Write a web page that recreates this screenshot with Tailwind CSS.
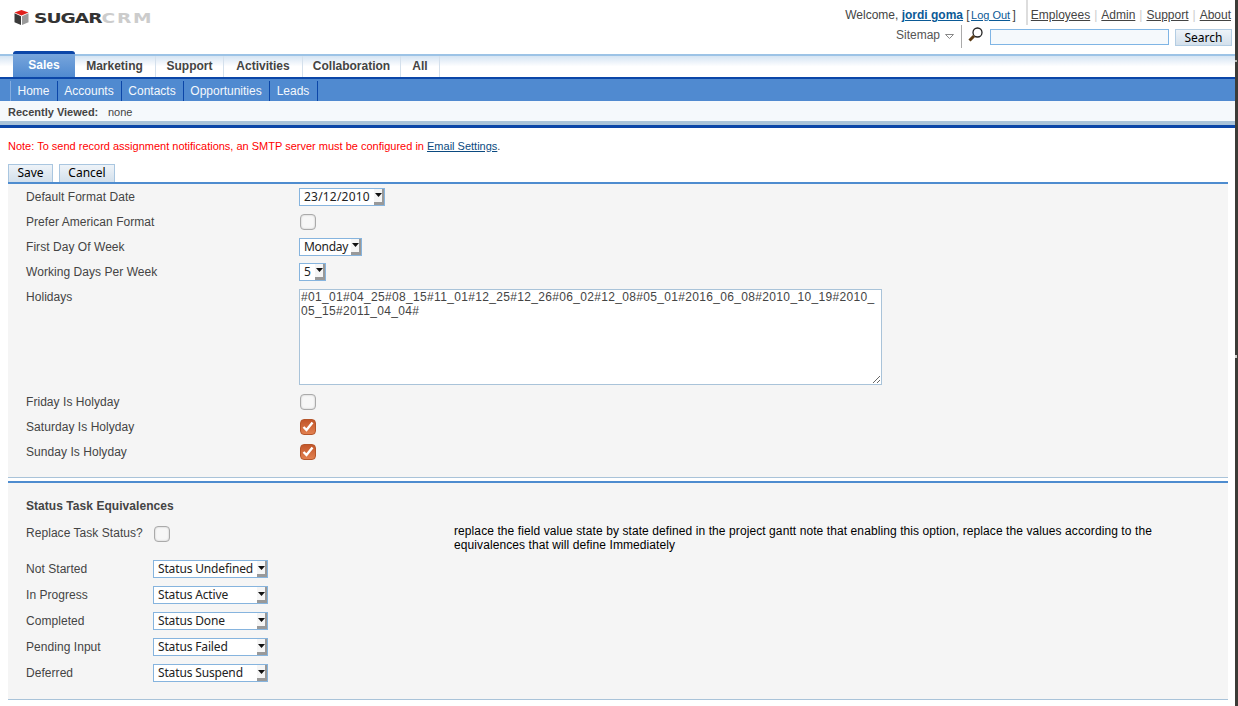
<!DOCTYPE html>
<html lang="en">
<head>
    <meta charset="UTF-8">
    <title>SugarCRM</title>
    <script src="https://cdn.jsdelivr.net/npm/@tailwindcss/browser@4"></script>
</head>
<body class="bg-white overflow-hidden h-[706px] font-['Liberation_Sans',sans-serif] text-[12px] text-[#444]">
<div class="flex h-[706px]">
<div class="w-[1235px] shrink-0">

    <!-- header -->
    <header class="h-[54px] flex justify-between">
        <div class="pl-[14px] pt-[10px] flex items-start">
            <svg width="15" height="15" viewBox="0 0 15 15">
                <path d="M7.5 0 L14.5 2.5 L7.5 5.5 L0.5 2.5 Z" fill="#e0201c"/>
                <path d="M0.5 3.2 L7 6.2 V15 L0.5 12.2 Z" fill="#3a3a3a"/>
                <path d="M8 6.2 L14.5 3.2 V12.2 L8 15 Z" fill="#9a9a9a"/>
            </svg>
            <div class="ml-[5px] mt-[1px] font-['DejaVu_Sans',sans-serif] font-bold text-[14px] leading-[15px] origin-left scale-x-[1.33] whitespace-nowrap text-[#333] tracking-[-0.75px]">SUGAR<span class="text-[#ccc] tracking-[1.3px]">CRM</span></div>
        </div>
        <div class="flex flex-col items-end pr-[4px]">
            <div class="flex h-[25px]">
                <div class="pt-[8px] leading-[14px] pr-[10px] text-[#444]">Welcome, <a class="font-bold text-[#0b5a96] underline">jordi goma</a> [ <a class="-ml-[2px] text-[11px] text-[#0b5a96] underline">Log Out</a><span class="-ml-[1px]"> ]</span></div>
                <div class="w-[2px] bg-[#ddd]"></div>
                <div class="pt-[8px] pl-[3px] leading-[14px] flex text-[#444]">
                    <a class="underline">Employees</a><span class="px-[4px] text-[#ccc]">|</span>
                    <a class="underline">Admin</a><span class="px-[4px] text-[#ccc]">|</span>
                    <a class="underline">Support</a><span class="px-[4px] text-[#ccc]">|</span>
                    <a class="underline">About</a>
                </div>
            </div>
            <div class="flex h-[23px] items-start -mr-[1px]">
                <div class="pt-[3px] leading-[14px] text-[#555]">Sitemap</div>
                <svg width="9" height="5" viewBox="0 0 9 5" class="ml-[5px] mt-[9px]"><path d="M0.5 0.5 H8.5 L4.5 4.5 Z" fill="none" stroke="#888"/></svg>
                <div class="ml-[7px] w-[1px] h-[23px] bg-[#aaa]"></div>
                <svg width="15" height="15" viewBox="0 0 15 15" class="ml-[6px] mt-[2px]">
                    <circle cx="9.5" cy="5.5" r="4.5" fill="#fff" stroke="#222" stroke-width="1.3"/>
                    <path d="M6 9 L1.5 13.5" stroke="#5a3a14" stroke-width="3"/>
                </svg>
                <input type="text" class="ml-[7px] mt-[4px] w-[179px] h-[16px] border border-[#7fb5e5] bg-[#f5f9fc]">
                <button class="ml-[6px] mt-[4px] w-[57px] h-[17px] border border-[#b3cde3] bg-gradient-to-b from-[#eef3f8] to-[#d3e0ec] font-['Noto_Sans',sans-serif] text-[12px] leading-[15px] text-black">Search</button>
            </div>
        </div>
    </header>

    <!-- module tabs -->
    <nav class="h-[25px] border-t-2 border-[#9cc3e6] bg-gradient-to-b from-[#d5e4f3] via-white to-white border-b-2 border-b-[#0b46a8] flex pl-[13px] font-bold text-[12px] leading-[21px] text-[#444]">
        <a class="relative -mt-[5px] h-[26px] w-[62px] rounded-t-[3px] border-t-[3px] border-[#0b46a8] bg-gradient-to-b from-[#77a5dc] to-[#508ad0] text-center text-white leading-[23px]">Sales</a>
        <a class="w-[81px] pr-[1px] text-center border-r border-[#d4e0ec]">Marketing</a>
        <a class="w-[68px] text-center border-r border-[#d4e0ec]">Support</a>
        <a class="w-[79px] text-center border-r border-[#d4e0ec]">Activities</a>
        <a class="w-[98px] text-center border-r border-[#d4e0ec]">Collaboration</a>
        <a class="w-[39px] text-center border-r border-[#d4e0ec]">All</a>
    </nav>

    <!-- sub tabs -->
    <div class="h-[22px] bg-[#508ad0] flex pl-[10px] pt-[2px] text-[12px] leading-[20px] text-[#f4f8fc]">
        <a class="w-[48px] pr-[1px] text-center border-l border-[#84ade0] border-r border-r-[#0b46a8]">Home</a>
        <a class="w-[64px] pr-[1px] text-center border-r border-[#0b46a8]">Accounts</a>
        <a class="w-[62px] pr-[1px] text-center border-r border-[#0b46a8]">Contacts</a>
        <a class="w-[86px] pr-[1px] text-center border-r border-[#0b46a8]">Opportunities</a>
        <a class="w-[48px] pr-[1px] text-center border-r border-[#0b46a8]">Leads</a>
    </div>

    <!-- recently viewed -->
    <div class="h-[20px] bg-[#f5f9fc] flex items-center pl-[8px] pt-[2px] text-[11px] text-[#444]">
        <span class="font-bold w-[100px]">Recently Viewed:</span><span>none</span>
    </div>
    <div class="h-[4px] bg-[#a9c3d9]"></div>
    <div class="h-[3px] bg-[#0b46a8]"></div>

    <main class="pl-[8px] pr-[7px]">
        <p class="pt-[12px] leading-[13px] text-[11px] text-[#f00]">Note: To send record assignment notifications, an SMTP server must be configured in <a class="text-[#0b4a80] underline">Email Settings</a><span class="text-[#444]">.</span></p>

        <div class="mt-[11px] flex gap-[6px] h-[18px] font-['Noto_Sans',sans-serif] text-[12px] text-black">
            <button class="w-[45px] pb-[2px] border border-[#a9c6e0] border-b-0 bg-gradient-to-b from-[#eef3f8] to-[#d3e0ec] leading-[16px]">Save</button>
            <button class="w-[56px] pb-[2px] border border-[#a9c6e0] border-b-0 bg-gradient-to-b from-[#eef3f8] to-[#d3e0ec] leading-[16px]">Cancel</button>
        </div>

        <!-- first panel -->
        <section class="h-[296px] border-t-2 border-[#4e8ccf] border-b border-b-[#a9c3d9] bg-[#f5f5f5] pl-[18px] tracking-[0.05px]">
            <div class="grid grid-cols-[273px_1fr] auto-rows-[25px] items-center">
                <div>Default Format Date</div>
                <div class="relative w-[86px] h-[18px] border border-[#86b4de] bg-white pl-[4px] font-['Noto_Sans',sans-serif] text-[12px] leading-[15px] tracking-[0.2px] text-[#222]">
                    23/12/2010
                    <div class="absolute right-0 top-0 w-[10px] h-[16px] bg-[#f5f5f5] border-r-2 border-b-[3px] border-[#999] flex items-center justify-center"><svg width="7" height="4"><path d="M0 0 H7 L3.5 4 Z" fill="#111"/></svg></div>
                </div>

                <div>Prefer American Format</div>
                <div class="w-[16px] h-[16px] ml-[1px] rounded-[4px] border border-[#aaa] bg-[#f7f7f7] shadow-[inset_0_0_2px_#bbb]"></div>

                <div>First Day Of Week</div>
                <div class="relative w-[63px] h-[18px] border border-[#86b4de] bg-white pl-[4px] font-['Noto_Sans',sans-serif] text-[12px] leading-[15px] tracking-[-0.3px] text-[#222]">
                    Monday
                    <div class="absolute right-0 top-0 w-[10px] h-[16px] bg-[#f5f5f5] border-r-2 border-b-[3px] border-[#999] flex items-center justify-center"><svg width="7" height="4"><path d="M0 0 H7 L3.5 4 Z" fill="#111"/></svg></div>
                </div>

                <div>Working Days Per Week</div>
                <div class="relative w-[27px] h-[18px] border border-[#86b4de] bg-white pl-[4px] font-['Noto_Sans',sans-serif] text-[12px] leading-[15px] text-[#222]">
                    5
                    <div class="absolute right-0 top-0 w-[10px] h-[16px] bg-[#f5f5f5] border-r-2 border-b-[3px] border-[#999] flex items-center justify-center"><svg width="7" height="4"><path d="M0 0 H7 L3.5 4 Z" fill="#111"/></svg></div>
                </div>
            </div>

            <div class="grid grid-cols-[273px_1fr] h-[105px]">
                <div class="pt-[6px] leading-[14px]">Holidays</div>
                <textarea class="mt-[5px] w-[583px] h-[96px] border border-[#a9c3d9] bg-white pl-[1px] pt-0 text-[12px] leading-[14px] tracking-[0.33px] text-[#444] whitespace-pre">#01_01#04_25#08_15#11_01#12_25#12_26#06_02#12_08#05_01#2016_06_08#2010_10_19#2010_
05_15#2011_04_04#</textarea>
            </div>

            <div class="grid grid-cols-[273px_1fr] auto-rows-[25px] items-center">
                <div>Friday Is Holyday</div>
                <div class="w-[16px] h-[16px] ml-[1px] rounded-[4px] border border-[#aaa] bg-[#f7f7f7] shadow-[inset_0_0_2px_#bbb]"></div>

                <div>Saturday Is Holyday</div>
                <div class="w-[16px] h-[16px] ml-[1px] rounded-[4px] border border-[#b5552a] bg-gradient-to-b from-[#c2562a] to-[#e2804f] flex items-center justify-center">
                    <svg width="12" height="11" viewBox="0 0 12 11"><path d="M1.5 6 L4.5 9 L10.5 1.5" fill="none" stroke="#fff" stroke-width="2.4"/></svg>
                </div>

                <div>Sunday Is Holyday</div>
                <div class="w-[16px] h-[16px] ml-[1px] rounded-[4px] border border-[#b5552a] bg-gradient-to-b from-[#c2562a] to-[#e2804f] flex items-center justify-center">
                    <svg width="12" height="11" viewBox="0 0 12 11"><path d="M1.5 6 L4.5 9 L10.5 1.5" fill="none" stroke="#fff" stroke-width="2.4"/></svg>
                </div>
            </div>
        </section>

        <!-- second panel -->
        <section class="mt-[3px] h-[219px] border-t-2 border-[#4e8ccf] border-b border-b-[#a9c3d9] bg-[#f5f5f5] pl-[18px] tracking-[0.05px]">
            <h3 class="pt-[16px] font-bold leading-[14px] text-[12px] text-[#444]">Status Task Equivalences</h3>
            <div class="mt-[7px] flex h-[26px]">
                <div class="w-[128px] pt-[6px] leading-[14px]">Replace Task Status?</div>
                <div class="mt-[6px] w-[16px] h-[16px] rounded-[4px] border border-[#aaa] bg-[#f7f7f7] shadow-[inset_0_0_2px_#bbb]"></div>
                <p class="ml-[284px] pt-[4px] w-[720px] leading-[14px] tracking-[0.09px] text-black">replace the field value state by state defined in the project gantt note that enabling this option, replace the values according to the equivalences that will define Immediately</p>
            </div>
            <div class="mt-[10px] grid grid-cols-[127px_1fr] auto-rows-[26px] items-center">
                <div>Not Started</div>
                <div class="relative w-[115px] h-[18px] border border-[#86b4de] bg-white pl-[4px] font-['Noto_Sans',sans-serif] text-[12px] leading-[15px] tracking-[-0.15px] text-[#222]">
                    Status Undefined
                    <div class="absolute right-0 top-0 w-[10px] h-[16px] bg-[#f5f5f5] border-r-2 border-b-[3px] border-[#999] flex items-center justify-center"><svg width="7" height="4"><path d="M0 0 H7 L3.5 4 Z" fill="#111"/></svg></div>
                </div>

                <div>In Progress</div>
                <div class="relative w-[115px] h-[18px] border border-[#86b4de] bg-white pl-[4px] font-['Noto_Sans',sans-serif] text-[12px] leading-[15px] tracking-[-0.15px] text-[#222]">
                    Status Active
                    <div class="absolute right-0 top-0 w-[10px] h-[16px] bg-[#f5f5f5] border-r-2 border-b-[3px] border-[#999] flex items-center justify-center"><svg width="7" height="4"><path d="M0 0 H7 L3.5 4 Z" fill="#111"/></svg></div>
                </div>

                <div>Completed</div>
                <div class="relative w-[115px] h-[18px] border border-[#86b4de] bg-white pl-[4px] font-['Noto_Sans',sans-serif] text-[12px] leading-[15px] tracking-[-0.15px] text-[#222]">
                    Status Done
                    <div class="absolute right-0 top-0 w-[10px] h-[16px] bg-[#f5f5f5] border-r-2 border-b-[3px] border-[#999] flex items-center justify-center"><svg width="7" height="4"><path d="M0 0 H7 L3.5 4 Z" fill="#111"/></svg></div>
                </div>

                <div>Pending Input</div>
                <div class="relative w-[115px] h-[18px] border border-[#86b4de] bg-white pl-[4px] font-['Noto_Sans',sans-serif] text-[12px] leading-[15px] tracking-[-0.15px] text-[#222]">
                    Status Failed
                    <div class="absolute right-0 top-0 w-[10px] h-[16px] bg-[#f5f5f5] border-r-2 border-b-[3px] border-[#999] flex items-center justify-center"><svg width="7" height="4"><path d="M0 0 H7 L3.5 4 Z" fill="#111"/></svg></div>
                </div>

                <div>Deferred</div>
                <div class="relative w-[115px] h-[18px] border border-[#86b4de] bg-white pl-[4px] font-['Noto_Sans',sans-serif] text-[12px] leading-[15px] tracking-[-0.15px] text-[#222]">
                    Status Suspend
                    <div class="absolute right-0 top-0 w-[10px] h-[16px] bg-[#f5f5f5] border-r-2 border-b-[3px] border-[#999] flex items-center justify-center"><svg width="7" height="4"><path d="M0 0 H7 L3.5 4 Z" fill="#111"/></svg></div>
                </div>
            </div>
        </section>
    </main>
</div>
<div class="relative w-[3px] shrink-0 bg-[#3c3b37]">
    <div class="absolute left-0 top-[60px] w-[2px] h-[2px] bg-[#b8b8b4]"></div>
    <div class="absolute left-0 top-[355px] w-[2px] h-[3px] bg-[#d0d0cc]"></div>
</div>
</div>
</body>
</html>
